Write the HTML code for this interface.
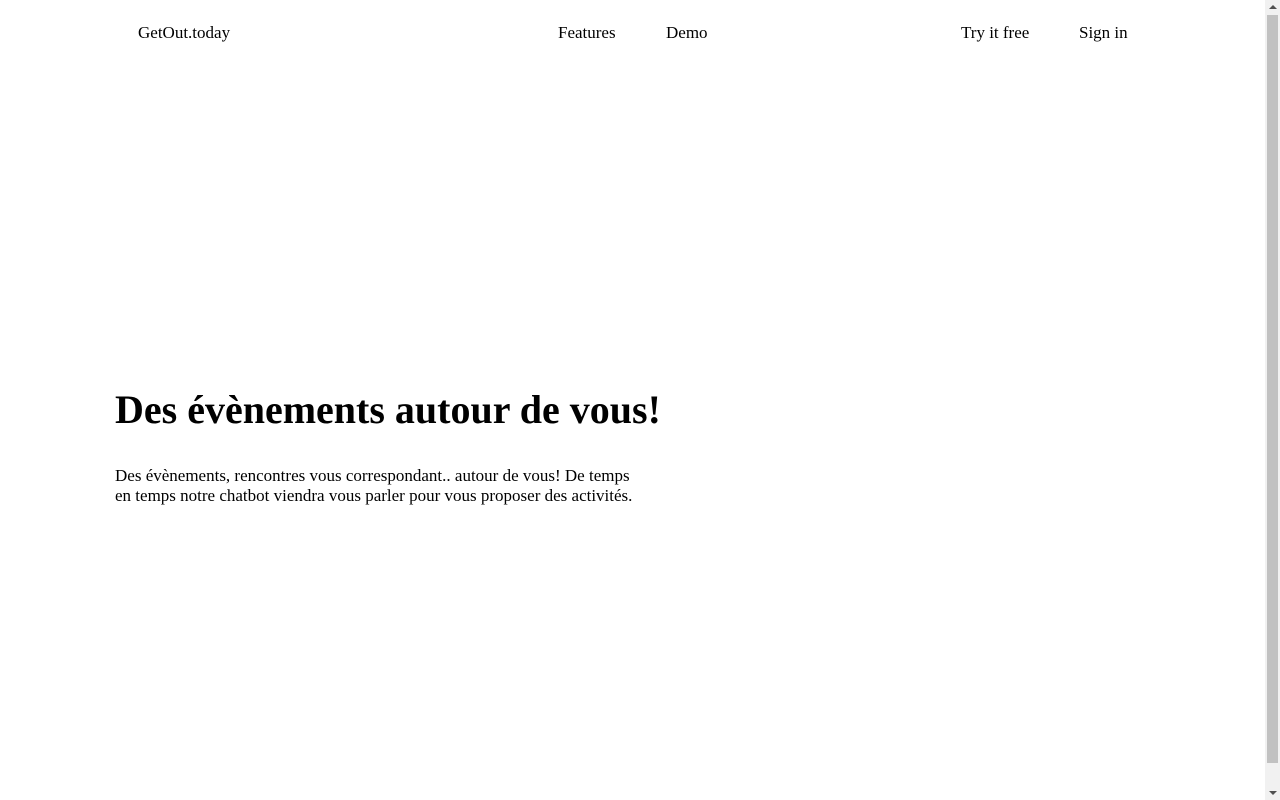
<!DOCTYPE html>
<html><head><meta charset="utf-8"><style>
html,body{margin:0;padding:0;background:#fff;overflow:hidden;}
body{font-family:"Liberation Serif",serif;color:#000;height:800px;width:1280px;position:relative;}
.a{position:absolute;white-space:nowrap;font-size:17px;line-height:20px;}
h1{position:absolute;left:115px;top:386px;margin:0;font-size:40px;line-height:48px;font-weight:bold;white-space:nowrap;}
p{position:absolute;left:115px;top:466px;margin:0;font-size:17px;line-height:20px;width:530px;}
.sb{position:absolute;right:0;top:0;width:15px;height:800px;background:#f1f1f1;}
.th{position:absolute;left:2px;top:15px;width:11px;height:748px;background:#c1c1c1;border-radius:0;}
.up,.dn{position:absolute;left:4px;width:0;height:0;border-left:4px solid transparent;border-right:4px solid transparent;}
.up{top:5px;border-bottom:4px solid #505050;}
.dn{bottom:5px;border-top:4px solid #505050;}
</style></head><body>
<div class="a" style="left:138px;top:23px">GetOut.today</div>
<div class="a" style="left:558px;top:23px">Features</div>
<div class="a" style="left:666px;top:23px">Demo</div>
<div class="a" style="left:961px;top:23px">Try it free</div>
<div class="a" style="left:1079px;top:23px">Sign in</div>
<h1>Des évènements autour de vous!</h1>
<p>Des évènements, rencontres vous correspondant.. autour de vous! De temps<br>en temps notre chatbot viendra vous parler pour vous proposer des activités.</p>
<div class="sb"><div class="up"></div><div class="th"></div><div class="dn"></div></div>
</body></html>
